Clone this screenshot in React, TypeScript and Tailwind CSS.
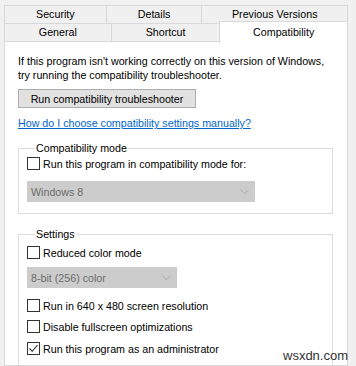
import React from 'react';

const FONT = '"Liberation Sans", Arial, sans-serif';

function Tab({ label, className = '' }: { label: string; className?: string }) {
  return (
    <div
      className={`flex items-center justify-center border border-[#d9d9d9] bg-[#f0f0f0] text-[10.7px] text-black -ml-px first:ml-0 ${className}`}
    >
      {label}
    </div>
  );
}

function CheckBox({ checked = false }: { checked?: boolean }) {
  return (
    <span className="flex h-[13px] w-[13px] shrink-0 items-center justify-center border border-[#333333] bg-white">
      {checked && (
        <svg width="11" height="11" viewBox="0 0 11 11">
          <path d="M1.5 5.5 L4.2 8.3 L9.5 2.2" fill="none" stroke="#333333" strokeWidth="1.1" />
        </svg>
      )}
    </span>
  );
}

function Option({ label, checked = false, className = '' }: { label: string; checked?: boolean; className?: string }) {
  return (
    <div className={`flex h-[13px] items-center gap-[3px] ${className}`}>
      <CheckBox checked={checked} />
      <span className="text-[10.7px] leading-[14px] text-black">{label}</span>
    </div>
  );
}

function Dropdown({ value, width, className = '' }: { value: string; width: string; className?: string }) {
  return (
    <div
      className={`flex h-[21px] items-center justify-between border border-[#cccccc] bg-[#cccccc] pl-[3px] pr-[5px] ${width} ${className}`}
    >
      <span className="text-[10.7px] text-[#6d6d6d]">{value}</span>
      <svg width="9" height="6" viewBox="0 0 9 6">
        <path d="M0.5 0.8 L4.5 4.8 L8.5 0.8" fill="none" stroke="#a6a6a6" strokeWidth="1" />
      </svg>
    </div>
  );
}

export default function App() {
  return (
    <div
      className="relative flex h-[366px] w-[356px] flex-col overflow-hidden bg-[#f0f0f0] pl-[4px] pt-[5px]"
      style={{ fontFamily: FONT }}
    >
      {/* tab rows */}
      <div className="flex h-[19px] w-[344px]">
        <Tab label="Security" className="w-[103px]" />
        <Tab label="Details" className="w-[97px]" />
        <Tab label="Previous Versions" className="w-[147px]" />
      </div>
      <div className="-mt-px flex h-[19px] w-[344px]">
        <Tab label="General" className="w-[108px]" />
        <Tab label="Shortcut" className="w-[110px]" />
        <div className="relative z-10 -ml-px -mt-[2px] flex h-[22px] w-[129px] items-start justify-center border border-b-0 border-[#d9d9d9] bg-white pt-[2px] text-[10.7px] text-black">
          Compatibility
        </div>
      </div>

      {/* page */}
      <div className="-mt-px flex w-[344px] flex-1 flex-col border border-[#d9d9d9] bg-white pl-[13px] pt-[12px] text-[10.7px] leading-[14px] text-black">
        <p>If this program isn't working correctly on this version of Windows,</p>
        <p>try running the compatibility troubleshooter.</p>

        <button
          type="button"
          className="mt-[7px] flex h-[19px] w-[178px] items-center justify-center border border-[#adadad] bg-[#e1e1e1] text-[10.7px] text-black"
        >
          Run compatibility troubleshooter
        </button>

        <a className="mt-[8px] w-fit text-[#0066cc] underline">How do I choose compatibility settings manually?</a>

        <fieldset className="mt-[11px] w-[315px] border border-[#dcdcdc] pb-[11px] pl-[8px] pt-[2px]">
          <legend className="ml-[8px] px-[1px] leading-[14px]">Compatibility mode</legend>
          <Option label="Run this program in compatibility mode for:" />
          <Dropdown value="Windows 8" width="w-[228px]" className="mt-[11px]" />
        </fieldset>

        <fieldset className="mt-[13px] w-[315px] flex-1 border border-b-0 border-[#dcdcdc] pl-[8px] pt-[5px]">
          <legend className="ml-[8px] px-[1px] leading-[14px]">Settings</legend>
          <Option label="Reduced color mode" />
          <Dropdown value="8-bit (256) color" width="w-[150px]" className="mt-[8px]" />
          <Option label="Run in 640 x 480 screen resolution" className="mt-[11px]" />
          <Option label="Disable fullscreen optimizations" className="mt-[8px]" />
          <Option label="Run this program as an administrator" checked className="mt-[9px]" />
        </fieldset>
      </div>

      <span className="absolute bottom-[3px] left-[283px] text-[13px] leading-[15px] text-[#333333]">wsxdn.com</span>
    </div>
  );
}
